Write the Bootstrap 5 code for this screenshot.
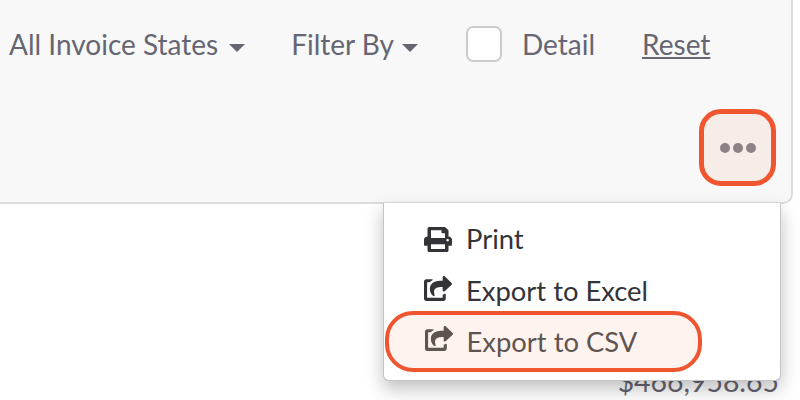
<!DOCTYPE html>
<html lang="en">
<head>
<meta charset="utf-8">
<title>Invoices</title>
<link href="https://cdn.jsdelivr.net/npm/bootstrap@5.3.0/dist/css/bootstrap.min.css" rel="stylesheet">
<style>
html,body{height:400px;overflow:hidden;background:#fff}
body{font-family:"Lato","Open Sans",sans-serif;font-size:28px;position:relative}
.tool-panel{width:793px;height:204px;background:#f8f8f8;border:solid #dcdcdc;border-width:0 2px 2px 0;border-bottom-right-radius:10px;color:#666673;box-sizing:border-box}
.tool-row{height:88px;padding-left:9px}
.caret-down{display:inline-block;width:0;height:0;border-left:8px solid transparent;border-right:8px solid transparent;border-top:8px solid #666673;margin-left:11px;vertical-align:middle}
.tool-drop.is-tight .caret-down{margin-left:8px}
.check-box{appearance:none;width:36px;height:36px;background:#fff;border:2px solid #cbcbcb;border-radius:7px;margin:0 20px 0 0}
.reset-link{color:#666673}
.tool-drop{margin-right:46px}
.tool-drop.is-tight{margin-right:48px}
.detail-label{margin-right:47px}
.more-wrap{padding:21px 15px 0 0}
.more-btn{width:77px;height:77px;border:5px solid #ef5630;border-radius:22px;background:#f6ede8;padding:0;gap:3px}
.more-btn i{display:block;width:10px;height:10px;border-radius:50%;background:#8f8186}
.amount{color:#666673;font-size:28.4px;padding:0 21px 0 0;margin-top:162px;line-height:30px}
.action-menu{position:absolute;left:383px;top:203px;width:398px;height:178px;margin:0;padding:10px 0 0;border:1px solid #c4c4c4;border-top:0;border-radius:0 0 6px 6px;box-shadow:0 8px 18px rgba(0,0,0,.25);font-size:27.4px;display:block}
.action-menu .dropdown-item{display:flex;align-items:center;height:52px;padding:0 0 0 40px;color:#333338;gap:14px}
.action-menu svg{width:28px;height:25px;fill:currentColor;flex:none}
.action-menu svg.share-ico{margin-top:-6px}
.action-menu .dropdown-item.is-marked{position:relative;left:1px;width:317px;height:61px;margin-top:-6px;padding-left:35.5px;color:#5e5450;background:#fef3ee;border:4.5px solid #ef5630;border-radius:28px}
</style>
</head>
<body>
<div class="tool-panel">
  <div class="tool-row d-flex align-items-center">
    <span class="tool-drop">All Invoice States<span class="caret-down"></span></span>
    <span class="tool-drop is-tight">Filter By<span class="caret-down"></span></span>
    <input class="check-box me-3" type="checkbox" aria-label="Detail">
    <span class="detail-label ms-1">Detail</span>
    <a class="reset-link" href="#">Reset</a>
  </div>
  <div class="more-wrap d-flex justify-content-end">
    <button class="more-btn d-flex align-items-center justify-content-center" type="button" aria-label="More"><i></i><i></i><i></i></button>
  </div>
</div>
<div class="amount text-end">$466,958.65</div>
<ul class="dropdown-menu action-menu list-unstyled">
  <li><a class="dropdown-item" href="#"><svg viewBox="0 0 512 512" preserveAspectRatio="none"><path d="M448 192V77.25c0-8.49-3.37-16.62-9.37-22.63L393.37 9.37c-6-6-14.14-9.37-22.63-9.37H96C78.33 0 64 14.33 64 32v160c-35.35 0-64 28.65-64 64v112c0 8.84 7.16 16 16 16h48v96c0 17.67 14.33 32 32 32h320c17.67 0 32-14.33 32-32v-96h48c8.84 0 16-7.16 16-16V256c0-35.35-28.65-64-64-64zm-64 256H128v-96h256v96zm0-224H128V64h192v48c0 8.84 7.16 16 16 16h48v96zm48 72c-13.25 0-24-10.75-24-24 0-13.26 10.75-24 24-24s24 10.74 24 24c0 13.25-10.75 24-24 24z"/></svg>Print</a></li>
  <li><a class="dropdown-item" href="#"><svg class="share-ico" viewBox="0 0 576 512"><path d="M568.482 177.448L424.479 313.433C409.3 327.768 384 317.14 384 295.985v-71.963c-144.575.97-205.566 35.113-164.775 171.353 4.483 14.973-12.846 26.567-25.006 17.33C155.252 383.105 120 326.488 120 269.339c0-143.937 117.599-172.5 264-173.312V24.012c0-21.174 25.317-31.768 40.479-17.448l144.003 135.988c10.02 9.463 10.028 25.425 0 34.896zM384 379.128V448H64V128h50.916a11.99 11.99 0 0 0 8.648-3.693c14.953-15.568 32.237-27.89 51.014-37.676C185.708 80.83 181.584 64 169.033 64H48C21.49 64 0 85.49 0 112v352c0 26.51 21.49 48 48 48h352c26.51 0 48-21.49 48-48v-88.806c0-8.288-8.197-12.904-15.799-10.188-4.367 1.56-8.98 2.735-13.692 3.497-6.958 1.099-18.509 7.14-18.509 14.625z"/></svg>Export to Excel</a></li>
  <li><a class="dropdown-item is-marked" href="#"><svg class="share-ico" viewBox="0 0 576 512"><path d="M568.482 177.448L424.479 313.433C409.3 327.768 384 317.14 384 295.985v-71.963c-144.575.97-205.566 35.113-164.775 171.353 4.483 14.973-12.846 26.567-25.006 17.33C155.252 383.105 120 326.488 120 269.339c0-143.937 117.599-172.5 264-173.312V24.012c0-21.174 25.317-31.768 40.479-17.448l144.003 135.988c10.02 9.463 10.028 25.425 0 34.896zM384 379.128V448H64V128h50.916a11.99 11.99 0 0 0 8.648-3.693c14.953-15.568 32.237-27.89 51.014-37.676C185.708 80.83 181.584 64 169.033 64H48C21.49 64 0 85.49 0 112v352c0 26.51 21.49 48 48 48h352c26.51 0 48-21.49 48-48v-88.806c0-8.288-8.197-12.904-15.799-10.188-4.367 1.56-8.98 2.735-13.692 3.497-6.958 1.099-18.509 7.14-18.509 14.625z"/></svg>Export to CSV</a></li>
</ul>
<script src="https://cdn.jsdelivr.net/npm/bootstrap@5.3.0/dist/js/bootstrap.bundle.min.js"></script>
</body>
</html>
